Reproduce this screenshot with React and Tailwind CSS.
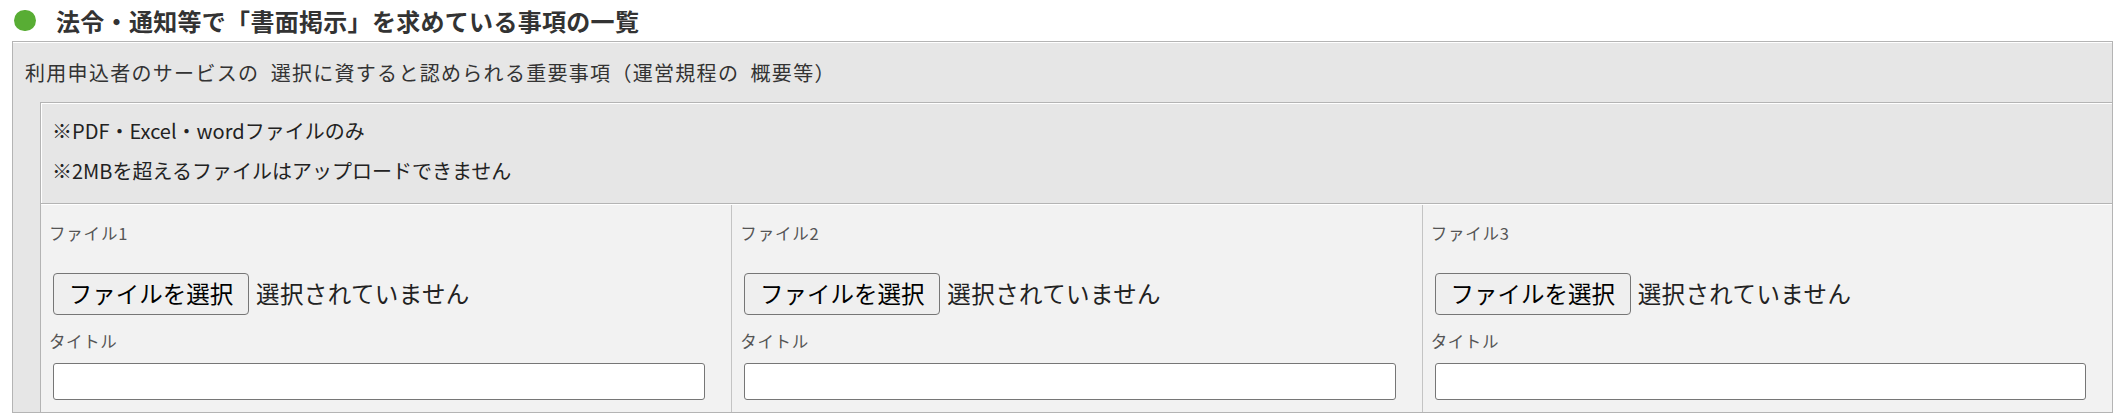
import React from "react";

const files = ["ファイル1", "ファイル2", "ファイル3"];

const FileCell = ({ label, first }) => (
  <div
    className={`bg-[#f2f2f2] pt-[16px] pb-[12px] pl-[8px] pr-[26px] ${
      first ? "" : "border-l border-[#c4c4c4]"
    }`}
  >
    <div className="h-[24px] leading-[24px] text-[16.5px] tracking-[0.8px] text-[#555]">{label}</div>
    <div className="mt-[28px] ml-[4px] flex items-center">
      <button className="h-[42px] w-[196px] rounded-[4px] border border-[#767676] bg-[#efefef] text-[23.5px] leading-none text-black">
        ファイルを選択
      </button>
      <span className="ml-[7px] text-[23.5px] tracking-[0.4px] text-[#222]">選択されていません</span>
    </div>
    <div className="mt-[14px] h-[24px] leading-[24px] text-[16.5px] tracking-[0.6px] text-[#555]">タイトル</div>
    <div className="mt-[10px] pl-[4px]">
      <input
        type="text"
        className="block h-[37px] w-full rounded-[3px] border border-[#767676] bg-white"
      />
    </div>
  </div>
);

export default function App() {
  return (
    <div
      className="w-[2122px] h-[416px] bg-white overflow-hidden"
      style={{ fontFamily: '"Noto Sans CJK JP", "Noto Sans", sans-serif' }}
    >
      {/* 見出し */}
      <div className="h-[41px] flex items-center pl-[14px]">
        <span className="w-[22px] h-[21px] rounded-full bg-[#58ad34]" />
        <h2 className="ml-[20px] text-[24px] font-bold leading-none tracking-[0.3px] text-[#333]">
          法令・通知等で「書面掲示」を求めている事項の一覧
        </h2>
      </div>

      {/* 外枠 */}
      <div className="ml-[12px] w-[2101px] border border-[#b4b4b4] bg-[#e6e6e6]">
        <div className="h-[60px] flex items-center border-t border-white pl-[12px] text-[20px] tracking-[1.3px] text-[#333]">
          利用申込者のサービスの{"\u2002"}選択に資すると認められる重要事項（運営規程の{"\u2002"}概要等）
        </div>

        <div className="pl-[27px]">
          <div className="border-l border-t border-[#b4b4b4]">
            <div className="h-[100px] border-t border-l border-white pt-[7px] pl-[10px] text-[20px] leading-[40px] text-[#222]">
              <p>※PDF・Excel・wordファイルのみ</p>
              <p>※2MBを超えるファイルはアップロードできません</p>
            </div>
            <div className="grid grid-cols-3 border-t border-[#b4b4b4]">
              {files.map((f, i) => (
                <div key={f} className="border-t border-white">
                  <FileCell label={f} first={i === 0} />
                </div>
              ))}
            </div>
          </div>
        </div>
      </div>
    </div>
  );
}
